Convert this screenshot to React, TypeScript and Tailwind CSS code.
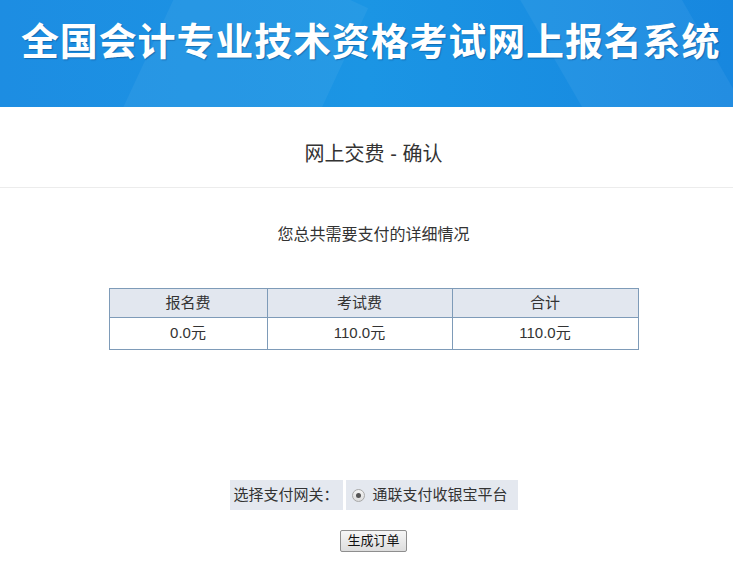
import React from 'react';

const FONT = '"Liberation Sans", "Noto Sans CJK SC", sans-serif';

const FEES = [
  {label: '报名费', value: '0.0元', width: 'w-[158px]'},
  {label: '考试费', value: '110.0元', width: 'w-[185px]'},
  {label: '合计', value: '110.0元', width: 'w-[186px]'},
];

export default function App() {
  return (
    <div className="w-full min-h-[568px] bg-white text-[#333]" style={{fontFamily: FONT}}>
      {/* Banner */}
      <div className="relative h-[107px] overflow-hidden bg-gradient-to-r from-[#1d8de2] via-[#1b95e4] to-[#1787df]">
        <div className="absolute left-[150px] top-[-40px] h-[220px] w-[180px] rotate-[25deg] bg-white/5" />
        <div className="absolute left-[560px] top-[-60px] h-[220px] w-[140px] -rotate-[30deg] bg-white/5" />
        <h1 className="relative pl-[21px] pt-[19px] text-[38px] leading-[46px] font-bold tracking-[0.85px] text-white whitespace-nowrap [text-shadow:1px_1px_1px_rgba(0,40,90,0.35)]">
          全国会计专业技术资格考试网上报名系统
        </h1>
      </div>

      {/* Title */}
      <div className="h-[81px] border-b border-[#ececec] pl-[14px] flex items-center justify-center">
        <span className="text-[20px] text-[#333] pt-[14px]">网上交费 - 确认</span>
      </div>

      <div className="pl-[14px] flex flex-col items-center">
        <p className="mt-[36px] text-[16px] leading-[22px] text-[#333]">您总共需要支付的详细情况</p>

        {/* Fee table */}
        <table className="mt-[42px] border-collapse border border-[#7e9bb8] text-[15px] text-[#333]">
          <thead>
            <tr className="bg-[#e2e7ef]">
              {FEES.map((f) => (
                <th
                  key={f.label}
                  className={`${f.width} h-[29px] border border-[#7e9bb8] font-normal text-center`}
                >
                  {f.label}
                </th>
              ))}
            </tr>
          </thead>
          <tbody>
            <tr>
              {FEES.map((f) => (
                <td
                  key={f.label}
                  className={`${f.width} h-[32px] border border-[#7e9bb8] text-center`}
                >
                  {f.value}
                </td>
              ))}
            </tr>
          </tbody>
        </table>

        {/* Gateway */}
        <div className="mt-[130px] flex gap-[3px] text-[15px] text-[#333]">
          <div className="h-[30px] w-[113px] bg-[#e4e8ef] flex items-center justify-center">
            选择支付网关：
          </div>
          <div className="h-[30px] w-[172px] bg-[#e4e8ef] flex items-center pl-[6px] gap-[8px]">
            <span className="w-[13px] h-[13px] rounded-full border border-[#a8a8a8] bg-gradient-to-b from-[#f4f4f4] to-[#dcdcdc] flex items-center justify-center">
              <span className="w-[5px] h-[5px] rounded-full bg-[#555]" />
            </span>
            <span>通联支付收银宝平台</span>
          </div>
        </div>

        <button className="mt-[20px] h-[22px] px-[6px] border border-[#8e8e8e] rounded-[2px] bg-gradient-to-b from-[#f6f6f6] to-[#dddddd] text-[13px] leading-[20px] text-[#111]">
          生成订单
        </button>
      </div>
    </div>
  );
}
